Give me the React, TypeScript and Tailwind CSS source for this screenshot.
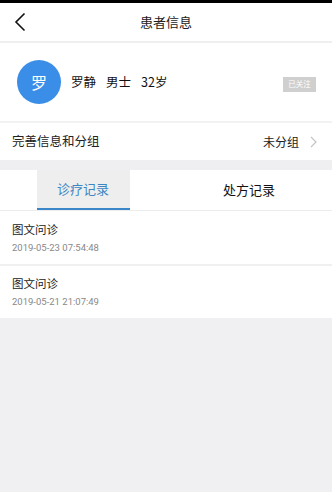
import React from "react";

const font = { fontFamily: '"Noto Sans CJK SC", "Noto Sans", sans-serif' };

export default function App() {
  return (
    <div className="w-[332px] h-[492px] bg-[#f0f0f2] flex flex-col overflow-hidden" style={font}>
      <div className="h-[3px] bg-black" />
      {/* header */}
      <div className="h-[38px] bg-white relative flex items-center justify-center">
        <svg className="absolute left-[14px] top-[9px]" width="12" height="20" viewBox="0 0 12 20">
          <path d="M10.5 1.5 L2 10 L10.5 18.5" fill="none" stroke="#111" strokeWidth="1.6" />
        </svg>
        <span className="text-[13px] text-[#222]">患者信息</span>
      </div>
      <div className="h-[2px] bg-[#efefef]" />
      {/* patient */}
      <div className="h-[78px] bg-white flex items-center pl-[17px] pr-[16px]">
        <div className="w-[44px] h-[44px] rounded-full bg-[#3a8ee8] flex items-center justify-center text-white text-[16px]">
          罗
        </div>
        <div className="ml-[10px] flex items-center gap-[10px] text-[12.5px] text-[#111]">
          <span>罗静</span>
          <span>男士</span>
          <span>32岁</span>
        </div>
        <div className="ml-auto mt-[4px] h-[15px] w-[33px] bg-[#cfcfcf] text-white text-[7.5px] flex items-center justify-center">
          已关注
        </div>
      </div>
      <div className="h-[2px] bg-[#f2f2f2]" />
      {/* row */}
      <div className="h-[37px] bg-white flex items-center pl-[12px] pr-[15px]">
        <span className="text-[12.5px] text-[#222]">完善信息和分组</span>
        <span className="ml-auto text-[12px] text-[#222]">未分组</span>
        <svg className="ml-[11px]" width="7" height="12" viewBox="0 0 7 12">
          <path d="M1 1 L6 6 L1 11" fill="none" stroke="#c4c4c4" strokeWidth="1.2" />
        </svg>
      </div>
      <div className="h-[10px] bg-[#efeff1]" />
      {/* tabs */}
      <div className="h-[40px] bg-white grid grid-cols-2">
        <div className="flex justify-center">
          <div className="w-[93px] h-full bg-[#eeeeee] flex items-center justify-center border-b-2 border-[#3a86c8]">
            <span className="text-[13px] text-[#3c86c4]">诊疗记录</span>
          </div>
        </div>
        <div className="flex items-center justify-center">
          <span className="text-[13px] text-[#111]">处方记录</span>
        </div>
      </div>
      <div className="h-[1px] bg-[#ececec]" />
      {/* list */}
      <div className="bg-white h-[53px] flex flex-col justify-center pl-[12px]">
        <span className="text-[11.5px] text-[#222] leading-[16px]">图文问诊</span>
        <span className="text-[9.5px] text-[#888] leading-[14px] mt-[4px]" style={{ fontFamily: 'Roboto, "Noto Sans", sans-serif' }}>
          2019-05-23 07:54:48
        </span>
      </div>
      <div className="h-[2px] bg-[#f0f0f0]" />
      <div className="bg-white h-[52px] flex flex-col justify-center pl-[12px]">
        <span className="text-[11.5px] text-[#222] leading-[16px]">图文问诊</span>
        <span className="text-[9.5px] text-[#888] leading-[14px] mt-[4px]" style={{ fontFamily: 'Roboto, "Noto Sans", sans-serif' }}>
          2019-05-21 21:07:49
        </span>
      </div>
    </div>
  );
}
